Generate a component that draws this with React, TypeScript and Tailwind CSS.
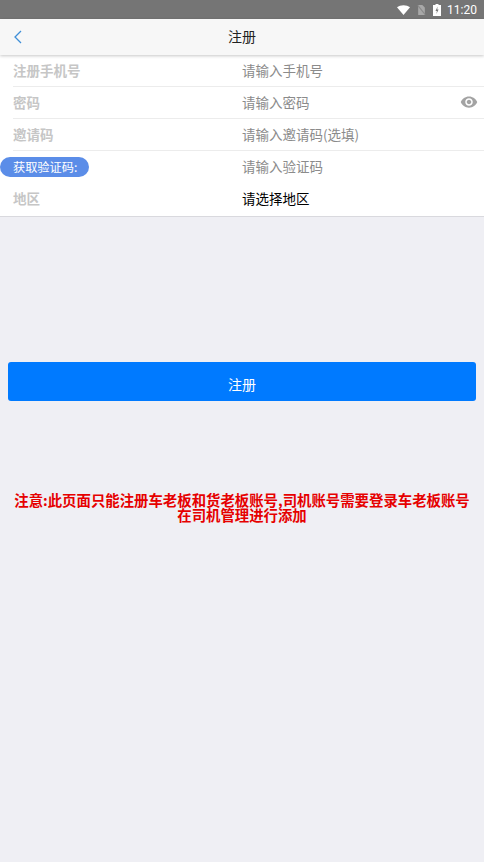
import React from "react";

const font = { fontFamily: '"Noto Sans CJK SC", Roboto, sans-serif' };

function Row({ label, value, dark, border = true, pill, eye, tall }: { label: string; value: string; dark?: boolean; border?: boolean; pill?: boolean; eye?: boolean; tall?: boolean }) {
  return (
    <div className={`${tall ? "h-[33px] pb-[3px]" : "h-8 pb-[2px]"} flex items-center relative`}>
      <div className="w-[242px] shrink-0 flex items-center">
        {pill ? (
          <span className="mt-[2px] h-5 w-[89px] rounded-full bg-[#5b8de8] text-white text-[12.2px] leading-5 pl-[13px] whitespace-nowrap">{label}</span>
        ) : (
          <span className="pl-[13px] text-[13.5px] font-bold text-[#c6c6c6]">{label}</span>
        )}
      </div>
      <span className={`text-[13.5px] ${dark ? "text-black" : "text-[#8b8b8b]"}`}>{value}</span>
      {eye && (
        <svg viewBox="0 0 24 24" className="w-[18px] h-[18px] ml-auto mr-[6px]" fill="#a3a3a3">
          <path d="M12 4.5C7 4.5 2.73 7.61 1 12c1.73 4.39 6 7.5 11 7.5s9.27-3.11 11-7.5c-1.73-4.39-6-7.5-11-7.5zM12 17c-2.76 0-5-2.24-5-5s2.24-5 5-5 5 2.24 5 5-2.24 5-5 5zm0-8c-1.66 0-3 1.34-3 3s1.34 3 3 3 3-1.34 3-3-1.34-3-3-3z" />
        </svg>
      )}
      {border && <div className="absolute bottom-0 left-[13px] right-0 h-px bg-[#ececec]" />}
    </div>
  );
}

export default function App() {
  return (
    <div className="w-[484px] h-[862px] bg-[#efeff4] flex flex-col overflow-hidden" style={font}>
      <div className="h-[19px] bg-[#757575] flex items-center justify-end shrink-0 pr-[7px] text-white">
        <svg viewBox="0 0 16 12" className="w-[13px] h-[10px]" fill="white"><path d="M0 2.5C2 .9 5 0 8 0s6 .9 8 2.5L8 12z" /></svg>
        <svg viewBox="0 0 10 12" className="w-[9px] h-[10px] ml-[7px]" fill="#a8a8a8"><path d="M1 0h5l3 3v9H1z" /><path d="M0 1l1-1 9 11-1 1z" fill="#8a8a8a" /></svg>
        <svg viewBox="0 0 8 12" className="w-[8px] h-[12px] ml-[7px]" fill="white"><path d="M2.5 0h3v1H8v11H0V1h2.5z" /><path d="M4.6 2.6 2.5 7h1.4l-.5 3L5.6 5.6H4.2z" fill="#757575" /></svg>
        <span className="ml-[6px] text-[12px] leading-none" style={{ fontFamily: "Roboto, sans-serif" }}>11:20</span>
      </div>
      <div className="h-9 pb-[2px] bg-[#f7f7f7] shrink-0 flex items-center justify-center relative shadow-[0_1px_3px_rgba(0,0,0,0.22)] z-10">
        <svg viewBox="0 0 10 14" className="absolute left-[13px] top-[11px] w-[10px] h-[14px]" fill="none" stroke="#3f8fd8" strokeWidth="1.3"><path d="M8 1 2 7l6 6" /></svg>
        <span className="text-[14px] text-[#222]">注册</span>
      </div>
      <div className="bg-white border-b border-[#d9d9de] shrink-0">
        <Row label="注册手机号" value="请输入手机号" />
        <Row label="密码" value="请输入密码" eye />
        <Row label="邀请码" value="请输入邀请码(选填)" />
        <Row label="获取验证码:" value="请输入验证码" pill border={false} />
        <Row label="地区" value="请选择地区" dark border={false} tall />
      </div>
      <button className="mx-2 mt-[145px] h-[39px] pt-[5px] shrink-0 rounded-[3px] bg-[#007aff] text-white text-[14px]" style={font}>注册</button>
      <div className="mt-[91px] px-2 text-center text-[14.4px] leading-[15px] font-bold text-[#e60000]">
        注意:此页面只能注册车老板和货老板账号,司机账号需要登录车老板账号
        <br />
        在司机管理进行添加
      </div>
    </div>
  );
}
